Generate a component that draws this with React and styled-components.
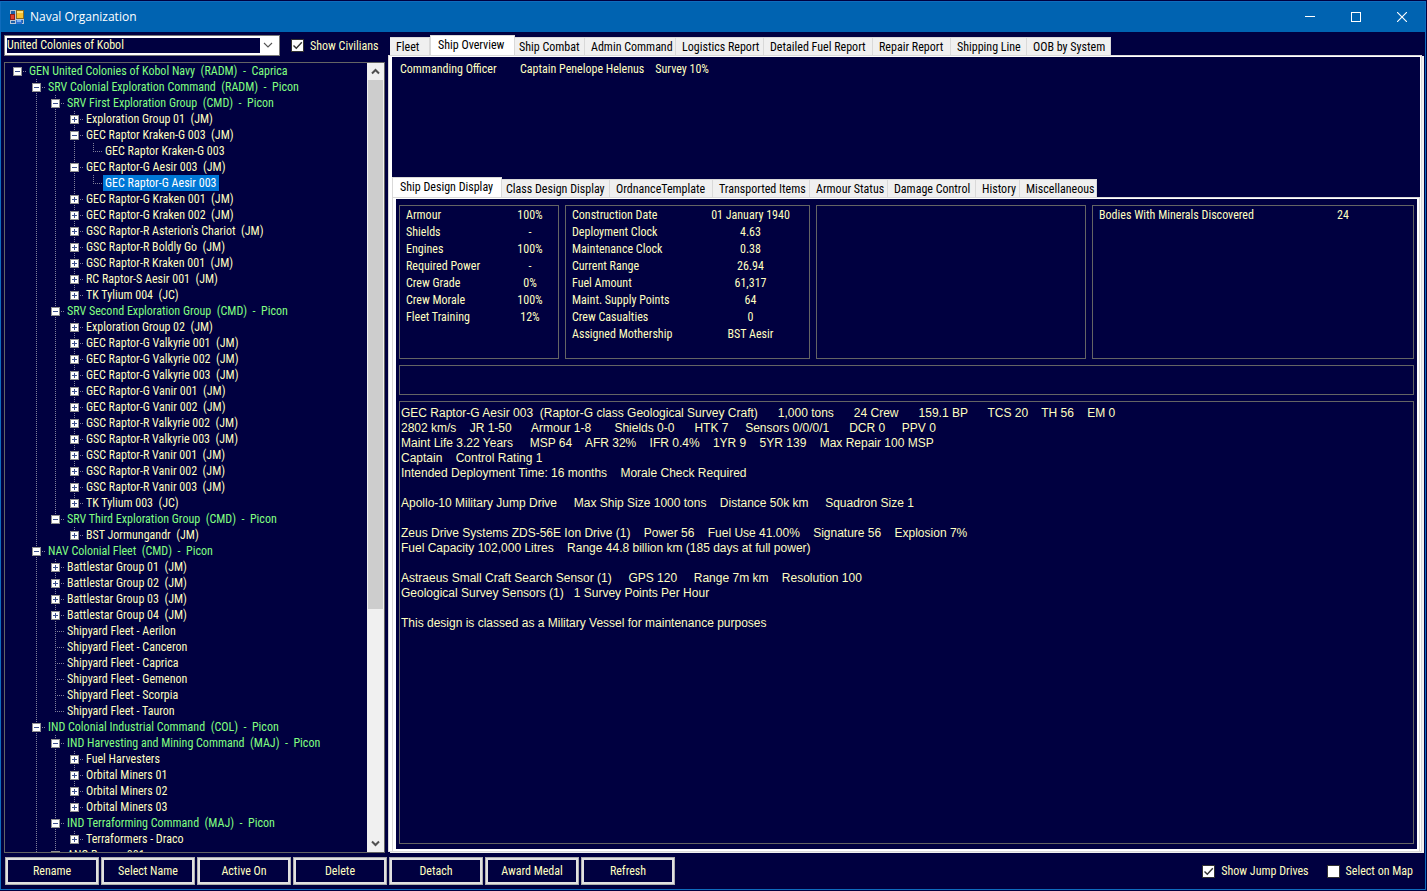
import React, { useState } from "react";
import styled, { createGlobalStyle } from "styled-components";

const node = (name, children, command) => ({ name, children, command });
const ship = (name) => node(name, []);
const fleet = (name) => node(name);
const command = (name, children) => node(name, children, true);

const TREE = command("GEN United Colonies of Kobol Navy  (RADM)  -  Caprica", [
  command("SRV Colonial Exploration Command  (RADM)  -  Picon", [
    command("SRV First Exploration Group  (CMD)  -  Picon", [
      ship("Exploration Group 01  (JM)"),
      node("GEC Raptor Kraken-G 003  (JM)", [fleet("GEC Raptor Kraken-G 003")]),
      node("GEC Raptor-G Aesir 003  (JM)", [fleet("GEC Raptor-G Aesir 003")]),
      ship("GEC Raptor-G Kraken 001  (JM)"),
      ship("GEC Raptor-G Kraken 002  (JM)"),
      ship("GSC Raptor-R Asterion's Chariot  (JM)"),
      ship("GSC Raptor-R Boldly Go  (JM)"),
      ship("GSC Raptor-R Kraken 001  (JM)"),
      ship("RC Raptor-S Aesir 001  (JM)"),
      ship("TK Tylium 004  (JC)"),
    ]),
    command("SRV Second Exploration Group  (CMD)  -  Picon", [
      ship("Exploration Group 02  (JM)"),
      ship("GEC Raptor-G Valkyrie 001  (JM)"),
      ship("GEC Raptor-G Valkyrie 002  (JM)"),
      ship("GEC Raptor-G Valkyrie 003  (JM)"),
      ship("GEC Raptor-G Vanir 001  (JM)"),
      ship("GEC Raptor-G Vanir 002  (JM)"),
      ship("GSC Raptor-R Valkyrie 002  (JM)"),
      ship("GSC Raptor-R Valkyrie 003  (JM)"),
      ship("GSC Raptor-R Vanir 001  (JM)"),
      ship("GSC Raptor-R Vanir 002  (JM)"),
      ship("GSC Raptor-R Vanir 003  (JM)"),
      ship("TK Tylium 003  (JC)"),
    ]),
    command("SRV Third Exploration Group  (CMD)  -  Picon", [
      ship("BST Jormungandr  (JM)"),
    ]),
  ]),
  command("NAV Colonial Fleet  (CMD)  -  Picon", [
    ship("Battlestar Group 01  (JM)"),
    ship("Battlestar Group 02  (JM)"),
    ship("Battlestar Group 03  (JM)"),
    ship("Battlestar Group 04  (JM)"),
    fleet("Shipyard Fleet - Aerilon"),
    fleet("Shipyard Fleet - Canceron"),
    fleet("Shipyard Fleet - Caprica"),
    fleet("Shipyard Fleet - Gemenon"),
    fleet("Shipyard Fleet - Scorpia"),
    fleet("Shipyard Fleet - Tauron"),
  ]),
  {
    more: true,
    ...command("IND Colonial Industrial Command  (COL)  -  Picon", [
      command("IND Harvesting and Mining Command  (MAJ)  -  Picon", [
        ship("Fuel Harvesters"),
        ship("Orbital Miners 01"),
        ship("Orbital Miners 02"),
        ship("Orbital Miners 03"),
      ]),
      command("IND Terraforming Command  (MAJ)  -  Picon", [
        ship("Terraformers - Draco"),
      ]),
      ship("ANC Ranger 001"),
    ]),
  },
]);

const MAIN_TABS = [
  ["Fleet", 40],
  ["Ship Overview", 85],
  ["Ship Combat", 70],
  ["Admin Command", 91],
  ["Logistics Report", 88],
  ["Detailed Fuel Report", 109],
  ["Repair Report", 78],
  ["Shipping Line", 76],
  ["OOB by System", 84],
];

const SHIP_TABS = [
  ["Ship Design Display", 110],
  ["Class Design Display", 108],
  ["OrdnanceTemplate", 103],
  ["Transported Items", 97],
  ["Armour Status", 78],
  ["Damage Control", 88],
  ["History", 44],
  ["Miscellaneous", 77],
];

const CONDITION = [
  ["Armour", "100%"],
  ["Shields", "-"],
  ["Engines", "100%"],
  ["Required Power", "-"],
  ["Crew Grade", "0%"],
  ["Crew Morale", "100%"],
  ["Fleet Training", "12%"],
];

const LOGISTICS = [
  ["Construction Date", "01 January 1940"],
  ["Deployment Clock", "4.63"],
  ["Maintenance Clock", "0.38"],
  ["Current Range", "26.94"],
  ["Fuel Amount", "61,317"],
  ["Maint. Supply Points", "64"],
  ["Crew Casualties", "0"],
  ["Assigned Mothership", "BST Aesir"],
];

const DESIGN = `GEC Raptor-G Aesir 003  (Raptor-G class Geological Survey Craft)      1,000 tons      24 Crew      159.1 BP      TCS 20    TH 56    EM 0
2802 km/s    JR 1-50      Armour 1-8       Shields 0-0      HTK 7     Sensors 0/0/0/1      DCR 0     PPV 0
Maint Life 3.22 Years     MSP 64    AFR 32%    IFR 0.4%    1YR 9    5YR 139    Max Repair 100 MSP
Captain    Control Rating 1
Intended Deployment Time: 16 months    Morale Check Required

Apollo-10 Military Jump Drive     Max Ship Size 1000 tons    Distance 50k km     Squadron Size 1

Zeus Drive Systems ZDS-56E Ion Drive (1)    Power 56    Fuel Use 41.00%    Signature 56    Explosion 7%
Fuel Capacity 102,000 Litres    Range 44.8 billion km (185 days at full power)

Astraeus Small Craft Search Sensor (1)     GPS 120     Range 7m km    Resolution 100
Geological Survey Sensors (1)   1 Survey Points Per Hour

This design is classed as a Military Vessel for maintenance purposes`;

const ACTIONS = ["Rename", "Select Name", "Active On", "Delete", "Detach", "Award Medal", "Refresh"];

function TreeNode({ item, guides, last, root, selected, onSelect }) {
  const [open, setOpen] = useState(Boolean(item.children && item.children.length));
  return (
    <li>
      <TreeRow>
        {guides.map((line, i) => (
          <Guide key={i} $line={line} />
        ))}
        <Branch $top={!root} $bottom={!root && !last}>
          {item.children && (
            <Toggle
              type="button"
              aria-label={item.name}
              aria-expanded={open}
              onClick={() => setOpen(!open)}
            >
              <svg width="7" height="7" viewBox="0 0 7 7" shapeRendering="crispEdges">
                <path d={open ? "M1 3h5v1h-5z" : "M1 3h5v1h-5z M3 1h1v5h-1z"} fill="#3c4f8c" />
              </svg>
            </Toggle>
          )}
        </Branch>
        <NodeLabel
          type="button"
          $command={item.command}
          $selected={selected === item.name}
          onClick={() => onSelect(item.name)}
        >
          {item.name}
        </NodeLabel>
      </TreeRow>
      {open && item.children && (
        <ul>
          {item.children.map((child, i) => (
            <TreeNode
              key={child.name}
              item={child}
              guides={[...guides, !root && !last]}
              last={i === item.children.length - 1 && !child.more}
              selected={selected}
              onSelect={onSelect}
            />
          ))}
        </ul>
      )}
    </li>
  );
}

function TabStrip({ tabs, initial }) {
  const [active, setActive] = useState(initial);
  return (
    <Tabs role="tablist">
      {tabs.map(([name, width]) => (
        <Tab
          key={name}
          type="button"
          role="tab"
          aria-selected={name === active}
          $active={name === active}
          $width={width}
          onClick={() => setActive(name)}
        >
          {name}
        </Tab>
      ))}
    </Tabs>
  );
}

function Stats({ rows, label, value }) {
  return (
    <StatTable $label={label} $value={value}>
      <tbody>
        {rows.map(([name, amount]) => (
          <tr key={name}>
            <th scope="row">{name}</th>
            <td>{amount}</td>
          </tr>
        ))}
      </tbody>
    </StatTable>
  );
}

function Check({ label, initial }) {
  const [checked, setChecked] = useState(initial);
  return (
    <CheckLabel>
      <CheckBox type="checkbox" checked={checked} onChange={() => setChecked(!checked)} />
      {label}
    </CheckLabel>
  );
}

function AppIcon() {
  return (
    <svg width="14" height="14" viewBox="0 0 14 14" shapeRendering="crispEdges">
      <path d="M0 0h14v14h-14z" fill="#b9c6d6" />
      <path d="M1 1h4v3h-4z M1 11h4v2h-4z M12 10h1v3h-1z" fill="#1f5fa8" />
      <path d="M6 0h8v9h-8z" fill="#8a6a1c" />
      <path d="M7 1h6v7h-6z" fill="#f7c231" />
      <path d="M7 1h6v2h-6z" fill="#ffe27a" />
      <path d="M0 4h5v6h-5z" fill="#8e1d16" />
      <path d="M1 5h3v4h-3z" fill="#e2402d" />
      <path d="M6 10h6v4h-6z" fill="#2d6fd0" />
      <path d="M7 10h4v2h-4z" fill="#7db4f5" />
    </svg>
  );
}

export default function App() {
  const [selected, setSelected] = useState("GEC Raptor-G Aesir 003");
  return (
    <>
      <GlobalStyle />
      <Window>
        <TitleBar>
          <AppIcon />
          <h1>Naval Organization</h1>
          <WindowButton type="button" aria-label="Minimize">
            <svg width="10" height="10" viewBox="0 0 10 10" shapeRendering="crispEdges">
              <path d="M0 4h10v1h-10z" fill="#fff" />
            </svg>
          </WindowButton>
          <WindowButton type="button" aria-label="Maximize">
            <svg width="10" height="10" viewBox="0 0 10 10" shapeRendering="crispEdges">
              <path d="M.5 .5h9v9h-9z" fill="none" stroke="#fff" />
            </svg>
          </WindowButton>
          <WindowButton type="button" aria-label="Close">
            <svg width="10" height="10" viewBox="0 0 10 10">
              <path d="M0 0l10 10M10 0l-10 10" fill="none" stroke="#fff" strokeWidth="1.1" />
            </svg>
          </WindowButton>
        </TitleBar>

        <Main>
          <Sidebar>
            <EmpireBar>
              <Combo>
                <select aria-label="Empire" defaultValue="United Colonies of Kobol">
                  <option>United Colonies of Kobol</option>
                </select>
                <svg width="17" height="15" viewBox="0 0 17 15">
                  <path d="M4 5l4 4l4-4" fill="none" stroke="#555" strokeWidth="1.1" />
                </svg>
              </Combo>
              <Check label="Show Civilians" initial={true} />
            </EmpireBar>
            <TreePanel>
              <TreeView>
                <ul>
                  <TreeNode item={TREE} guides={[]} last root selected={selected} onSelect={setSelected} />
                </ul>
              </TreeView>
              <ScrollBar>
                <ScrollButton type="button" aria-label="Scroll up">
                  <svg width="17" height="17" viewBox="0 0 17 17">
                    <path d="M5 10.5l3.500-3.500l3.500 3.500" fill="none" stroke="#505050" strokeWidth="2" />
                  </svg>
                </ScrollButton>
                <ScrollThumb />
                <ScrollSpace />
                <ScrollButton type="button" aria-label="Scroll down">
                  <svg width="17" height="17" viewBox="0 0 17 17">
                    <path d="M5 6.500l3.500 3.500l3.500-3.500" fill="none" stroke="#505050" strokeWidth="2" />
                  </svg>
                </ScrollButton>
              </ScrollBar>
            </TreePanel>
          </Sidebar>

          <TabControl>
            <MainStrip>
              <TabStrip tabs={MAIN_TABS} initial="Ship Overview" />
            </MainStrip>
            <MainPage>
              <PageBody>
                <Officer>
                  <dt>Commanding Officer</dt>
                  <dd>{"Captain Penelope Helenus    Survey 10%"}</dd>
                </Officer>
                <TabStrip tabs={SHIP_TABS} initial="Ship Design Display" />
                <ShipPage>
                  <ShipBody>
                    <Summary>
                      <Panel>
                        <Stats rows={CONDITION} label={106} value={48} />
                      </Panel>
                      <Panel>
                        <Stats rows={LOGISTICS} label={126} value={117} />
                      </Panel>
                      <Panel />
                      <Panel>
                        <Stats rows={[["Bodies With Minerals Discovered", "24"]]} label={200} value={100} />
                      </Panel>
                    </Summary>
                    <Notice />
                    <Design>{DESIGN}</Design>
                  </ShipBody>
                </ShipPage>
              </PageBody>
            </MainPage>
          </TabControl>
        </Main>

        <Footer>
          {ACTIONS.map((name) => (
            <ActionButton key={name} type="button">
              {name}
            </ActionButton>
          ))}
          <Options>
            <Check label="Show Jump Drives" initial={true} />
            <Check label="Select on Map" initial={false} />
          </Options>
        </Footer>
      </Window>
    </>
  );
}

const navy = "#000040";
const cream = "#ffffc0";
const uiFont = '12px/16px "Roboto Condensed", Roboto, "Liberation Sans", sans-serif';
const dotsDown = "repeating-linear-gradient(to bottom, #80809a 0 1px, transparent 1px 2px)";
const dotsAcross = "repeating-linear-gradient(to right, #80809a 0 1px, transparent 1px 2px)";

const GlobalStyle = createGlobalStyle`
  * {
    box-sizing: border-box;
  }
  body {
    margin: 0;
    background: ${navy};
    color: ${cream};
    font: ${uiFont};
  }
  button, select, input {
    margin: 0;
    font: inherit;
    color: inherit;
  }
  ul, dl, dd, h1 {
    margin: 0;
    padding: 0;
    list-style: none;
  }
  svg {
    display: block;
  }
`;

const Window = styled.div`
  display: flex;
  flex-direction: column;
  height: calc(100vh - 2px);
  margin: 1px 1px 1px 0;
  border: 1px solid #0f6cbd;
  background: ${navy};
`;

const TitleBar = styled.header`
  display: flex;
  align-items: center;
  height: 30px;
  flex: none;
  padding-left: 9px;
  background: #0063b1;

  h1 {
    flex: 1;
    padding-left: 6px;
    font: 12px/16px "Open Sans", "Noto Sans", sans-serif;
    color: #fff;
  }
`;

const WindowButton = styled.button`
  display: flex;
  align-items: center;
  justify-content: center;
  width: 46px;
  height: 30px;
  padding: 0;
  border: 0;
  background: none;
`;

const Main = styled.main`
  display: grid;
  grid-template-columns: 381px 1fr;
  gap: 3px;
  flex: 1;
  min-height: 0;
  padding: 3px 3px 0 3px;
`;

const Sidebar = styled.section`
  display: flex;
  flex-direction: column;
  gap: 6px;
  min-height: 0;
`;

const EmpireBar = styled.div`
  display: flex;
  align-items: center;
  gap: 11px;
`;

const Combo = styled.div`
  display: flex;
  align-items: center;
  width: 276px;
  height: 21px;
  padding: 2px;
  border: 1px solid #7a7a7a;
  background: #fff;

  select {
    flex: 1;
    height: 15px;
    padding: 0;
    border: 0;
    outline: 0;
    appearance: none;
    line-height: 15px;
    background: ${navy};
  }
`;

const CheckLabel = styled.label`
  display: flex;
  align-items: center;
  gap: 6px;
`;

const CheckBox = styled.input`
  appearance: none;
  width: 13px;
  height: 13px;
  border: 1px solid #333;
  background: #fff;

  &:checked {
    background: #fff
      url("data:image/svg+xml,%3Csvg xmlns='http://www.w3.org/2000/svg' width='11' height='11'%3E%3Cpath d='M1.500 5.500l2.800 2.800l5.500-6' fill='none' stroke='%23333' stroke-width='1.400'/%3E%3C/svg%3E");
  }
`;

const TreePanel = styled.div`
  display: flex;
  flex: 1;
  min-height: 0;
  border: 1px solid #646464;
`;

const TreeView = styled.div`
  flex: 1;
  min-width: 0;
  padding-left: 3px;
  overflow: hidden;
`;

const TreeRow = styled.div`
  display: flex;
  height: 16px;
`;

const Guide = styled.span`
  width: 19px;
  background: ${(p) => (p.$line ? dotsDown : "none")} 9px 0 / 1px 16px no-repeat;
`;

const Branch = styled.span`
  display: flex;
  align-items: center;
  width: 19px;
  padding: 1px 0 0 5px;
  background-image: ${dotsAcross}, ${(p) => (p.$top ? dotsDown : "none")}, ${(p) => (p.$bottom ? dotsDown : "none")};
  background-position: 9px 8px, 9px 0, 9px 8px;
  background-size: 10px 1px, 1px 8px, 1px 8px;
  background-repeat: no-repeat;
`;

const Toggle = styled.button`
  width: 9px;
  height: 9px;
  padding: 0;
  border: 1px solid #919191;
  background: #fff;
`;

const NodeLabel = styled.button`
  height: 16px;
  padding: 0 2px;
  border: 0;
  white-space: pre;
  color: ${(p) => (p.$selected ? "#fff" : p.$command ? "#80ff80" : cream)};
  background: ${(p) => (p.$selected ? "#0078d7" : "none")};
`;

const ScrollBar = styled.div`
  display: flex;
  flex-direction: column;
  width: 17px;
  background: #f0f0f0;
`;

const ScrollButton = styled.button`
  width: 17px;
  height: 17px;
  padding: 0;
  border: 0;
  background: none;
`;

const ScrollThumb = styled.div`
  flex: 70 1 0;
  margin: 0 1px;
  background: #cdcdcd;
`;

const ScrollSpace = styled.div`
  flex: 30 1 0;
`;

const TabControl = styled.section`
  display: flex;
  flex-direction: column;
  min-width: 0;
  min-height: 0;
`;

const MainStrip = styled.div`
  padding-left: 2px;
`;

const Tabs = styled.div`
  display: flex;
  align-items: flex-end;
  height: 20px;
`;

const Tab = styled.button`
  flex: none;
  width: ${(p) => p.$width}px;
  height: ${(p) => (p.$active ? 21 : 18)}px;
  margin-bottom: ${(p) => (p.$active ? -1 : 0)}px;
  padding: ${(p) => (p.$active ? "0 0 2px 7px" : "0 0 0 6px")};
  border: 1px solid #d9d9d9;
  border-width: 1px 1px 0 ${(p) => (p.$active ? 1 : 0)}px;
  text-align: left;
  white-space: nowrap;
  color: #000;
  background: ${(p) => (p.$active ? "#fff" : "#f0f0f0")};

  [aria-selected="true"] + & {
    padding-left: 4px;
  }
`;

const MainPage = styled.div`
  display: flex;
  flex: 1;
  min-height: 0;
  margin-bottom: 1px;
  padding: 1px 1px 0 3px;
  border: 1px solid #d9d9d9;
  background: #fff;
  box-shadow: 2px 1px 0 #f0f0f0;
`;

const PageBody = styled.div`
  display: flex;
  flex-direction: column;
  flex: 1;
  min-width: 0;
  background: ${navy};
`;

const Officer = styled.dl`
  display: flex;
  height: 120px;
  padding: 4px 8px;

  dt {
    width: 120px;
  }
  dd {
    white-space: pre;
  }
`;

const ShipPage = styled.div`
  display: flex;
  flex: 1;
  min-height: 0;
  padding: 1px 2px 2px 3px;
  border: 1px solid #d9d9d9;
  border-bottom: 0;
  background: #fff;
`;

const ShipBody = styled.div`
  display: flex;
  flex-direction: column;
  gap: 6px;
  flex: 1;
  min-width: 0;
  padding: 6px 3px 5px;
  background: ${navy};
`;

const Panel = styled.div`
  padding-top: 1px;
  border: 1px solid #646464;
`;

const Summary = styled.div`
  display: grid;
  grid-template-columns: 160px 245px 270px 1fr;
  gap: 6px;
  height: 154px;
`;

const StatTable = styled.table`
  width: ${(p) => p.$label + p.$value}px;
  border-collapse: collapse;
  table-layout: fixed;

  th,
  td {
    height: 17px;
    padding: 0;
    font-weight: normal;
    line-height: 17px;
    text-align: center;
    white-space: nowrap;
  }
  th {
    width: ${(p) => p.$label}px;
    padding-left: 6px;
    text-align: left;
  }
`;

const Notice = styled(Panel)`
  height: 30px;
`;

const Design = styled.pre`
  flex: 1;
  min-height: 0;
  margin: 0;
  padding: 4px 1px;
  border: 1px solid #646464;
  overflow: hidden;
  font: 12px/15px "Liberation Sans", Arial, sans-serif;
`;

const Footer = styled.footer`
  display: flex;
  gap: 2px;
  padding: 4px 12px 4px 4px;
`;

const ActionButton = styled.button`
  width: 94px;
  height: 28px;
  padding: 0;
  border: 1px solid #adadad;
  background: ${navy};
  box-shadow: inset 0 0 0 2px #e1e1e1;
`;

const Options = styled.div`
  display: flex;
  gap: 18px;
  margin-left: auto;
`;
